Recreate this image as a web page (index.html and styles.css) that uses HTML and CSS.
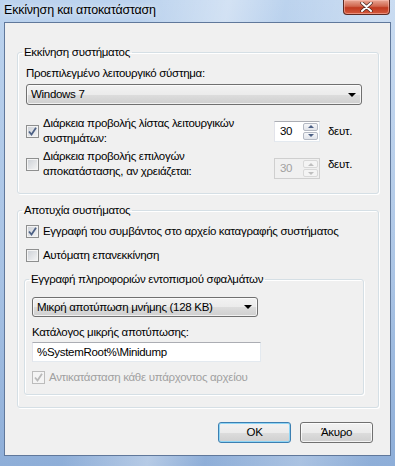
FILE: index.html
```html
<!DOCTYPE html>
<html lang="el">
<head>
    <meta charset="UTF-8">
    <title>Εκκίνηση και αποκατάσταση</title>
    <link rel="stylesheet" href="styles.css">
</head>
<body>
    <div class="window">
        <div class="titlebar">
            <span class="title">Εκκίνηση και αποκατάσταση</span>
            <span class="close-btn">
                <svg width="13" height="10" viewBox="0 0 13 10">
                    <path d="M2 1 L11 9 M11 1 L2 9" stroke="#4a2a24" stroke-width="3.4" stroke-linecap="round"/>
                    <path d="M2 1 L11 9 M11 1 L2 9" stroke="#fff" stroke-width="2" stroke-linecap="round"/>
                </svg>
            </span>
        </div>

        <div class="client">
            <!-- Εκκίνηση -->
            <fieldset class="group group-startup">
                <legend>Εκκίνηση συστήματος</legend>
                <div class="field-label">Προεπιλεγμένο λειτουργικό σύστημα:</div>
                <div class="combo combo-os"><span>Windows 7</span><i class="combo-arrow"></i></div>

                <div class="timer-row timer-list">
                    <label class="check">
                        <span class="box is-checked">
                            <svg width="9" height="9" viewBox="0 0 9 9"><path d="M1 4.5 L3.5 7.5 L8 0.8" fill="none" stroke="#4d6185" stroke-width="1.8"/></svg>
                        </span>
                        <span class="check-text">Διάρκεια προβολής λίστας λειτουργικών<br>συστημάτων:</span>
                    </label>
                    <div class="spin">
                        <span class="spin-value">30</span>
                        <span class="spin-btns"><span class="spin-up"><i></i></span><span class="spin-down"><i></i></span></span>
                    </div>
                    <span class="unit">δευτ.</span>
                </div>

                <div class="timer-row timer-recovery">
                    <label class="check">
                        <span class="box"></span>
                        <span class="check-text">Διάρκεια προβολής επιλογών<br>αποκατάστασης, αν χρειάζεται:</span>
                    </label>
                    <div class="spin is-disabled">
                        <span class="spin-value">30</span>
                        <span class="spin-btns"><span class="spin-up"><i></i></span><span class="spin-down"><i></i></span></span>
                    </div>
                    <span class="unit">δευτ.</span>
                </div>
            </fieldset>

            <!-- Αποτυχία -->
            <fieldset class="group group-failure">
                <legend>Αποτυχία συστήματος</legend>
                <label class="check check-line">
                    <span class="box is-checked">
                        <svg width="9" height="9" viewBox="0 0 9 9"><path d="M1 4.5 L3.5 7.5 L8 0.8" fill="none" stroke="#4d6185" stroke-width="1.8"/></svg>
                    </span>
                    <span class="check-text">Εγγραφή του συμβάντος στο αρχείο καταγραφής συστήματος</span>
                </label>
                <label class="check check-line check-restart">
                    <span class="box"></span>
                    <span class="check-text">Αυτόματη επανεκκίνηση</span>
                </label>

                <fieldset class="group group-debug">
                    <legend>Εγγραφή πληροφοριών εντοπισμού σφαλμάτων</legend>
                    <div class="combo combo-dump"><span>Μικρή αποτύπωση μνήμης (128 KB)</span><i class="combo-arrow"></i></div>
                    <div class="field-label dump-label">Κατάλογος μικρής αποτύπωσης:</div>
                    <div class="textbox">%SystemRoot%\Minidump</div>
                    <label class="check check-line is-disabled">
                        <span class="box is-checked">
                            <svg width="9" height="9" viewBox="0 0 9 9"><path d="M1 4.5 L3.5 7.5 L8 0.8" fill="none" stroke="#b9b9b9" stroke-width="1.8"/></svg>
                        </span>
                        <span class="check-text">Αντικατάσταση κάθε υπάρχοντος αρχείου</span>
                    </label>
                </fieldset>
            </fieldset>

            <div class="buttons">
                <button class="btn btn-default">OK</button>
                <button class="btn">Άκυρο</button>
            </div>
        </div>
    </div>
</body>
</html>
```

FILE: styles.css
```css
:root {
    --face: #f0f0f0;
    --group-line: #d5dfe5;
    --text: #000;
    --disabled: #a0a0a0;
}
* {
    margin: 0;
    padding: 0;
    box-sizing: border-box;
}
body {
    width: 395px;
    height: 466px;
    overflow: hidden;
    font-family: "Liberation Sans", "DejaVu Sans", sans-serif;
    font-size: 11.5px;
    line-height: 15px;
    letter-spacing: -0.3px;
    color: var(--text);
    background: #a9c3e3;
}
.window {
    height: 466px;
    display: flex;
    flex-direction: column;
    background:
        linear-gradient(100deg, rgba(255,255,255,0) 30%, rgba(255,255,255,0.35) 48%, rgba(255,255,255,0) 60%, rgba(255,255,255,0.25) 80%, rgba(255,255,255,0) 95%),
        linear-gradient(#bcd3ee, #a7c2e4 60%, #8eaed8);
}

/* title bar */
.titlebar {
    height: 22px;
    display: flex;
    justify-content: space-between;
    align-items: flex-start;
}
.title {
    padding: 3px 0 0 4px;
    font-size: 12.5px;
    letter-spacing: -0.2px;
    color: #000;
    text-shadow: 0 0 6px rgba(255, 255, 255, 0.9);
}
.close-btn {
    width: 47px;
    height: 15px;
    margin-right: 5px;
    display: flex;
    align-items: center;
    justify-content: center;
    border: 1px solid #5d2a22;
    border-top: none;
    border-radius: 0 0 4px 4px;
    background: linear-gradient(#e9a896, #d0664e 45%, #c0391f 55%, #d4593d);
    box-shadow: inset 0 0 0 1px rgba(255, 200, 190, 0.5);
}

/* client area */
.client {
    height: 434px;
    margin: 0 4px;
    padding: 21px 11px 0 12px;
    background: var(--face);
    border: 1px solid #60789b;
}

/* group boxes */
.group {
    border: 1px solid var(--group-line);
    border-radius: 3px;
    box-shadow: inset 1px 1px 0 #fff, 1px 1px 0 #fff;
}
.group legend {
    margin-left: -4px;
    padding: 0 2px;
    line-height: 16px;
}
.group-startup {
    padding: 6px 16px 14px 8px;
}
.group-failure {
    margin-top: 8px;
    padding: 6px 14px 12px 6px;
}
.group-failure > legend {
    margin-left: -2px;
}
.group-debug {
    margin-top: 8px;
    padding: 10px 7px 9px 7px;
}
.group-debug legend {
    margin-left: -3px;
}

.field-label {
    white-space: nowrap;
}

/* combo boxes */
.combo {
    height: 21px;
    margin-top: 3px;
    padding: 0 0 0 4px;
    display: flex;
    align-items: center;
    justify-content: space-between;
    border: 1px solid #707070;
    border-radius: 3px;
    background: linear-gradient(#f2f2f2, #ebebeb 50%, #dddddd 50%, #cfcfcf);
    box-shadow: inset 0 0 0 1px rgba(255, 255, 255, 0.7);
    white-space: nowrap;
}
.combo-arrow {
    width: 0;
    height: 0;
    margin-right: 5px;
    border-left: 4px solid transparent;
    border-right: 4px solid transparent;
    border-top: 4px solid #000;
}
.combo-dump {
    width: 226px;
    height: 20px;
    margin-top: 0;
}

/* checkboxes */
.check {
    display: flex;
    align-items: center;
    gap: 4px;
}
.box {
    flex: none;
    width: 13px;
    height: 13px;
    display: flex;
    align-items: center;
    justify-content: center;
    border: 1px solid #8e8f8f;
    background: linear-gradient(135deg, #cbcfd5, #f6f6f6);
    box-shadow: inset 0 0 0 1px #f4f4f4;
}
.check-line {
    margin-left: 2px;
}
.check-restart {
    margin-top: 9px;
}
.is-disabled {
    color: var(--disabled);
}
.is-disabled .box {
    border-color: #bcbcbc;
    background: #f4f4f4;
}

/* timer rows */
.timer-row {
    display: flex;
    align-items: center;
}
.timer-list {
    margin-top: 11px;
}
.timer-recovery {
    margin-top: 3px;
}
.timer-row .check {
    flex: 1;
}
.timer-recovery .spin {
    margin-top: 9px;
}
.spin {
    width: 46px;
    height: 21px;
    display: flex;
    border: 1px solid #abadb3;
    border-color: #abadb3 #e3e9ef #e3e9ef #e2e3ea;
    background: #fff;
}
.spin-value {
    flex: 1;
    padding: 2px 0 0 5px;
}
.spin-btns {
    width: 17px;
    display: flex;
    flex-direction: column;
    padding: 1px;
    gap: 1px;
}
.spin-btns > span {
    flex: 1;
    display: flex;
    align-items: center;
    justify-content: center;
    border: 1px solid #b4b9c3;
    border-radius: 2px;
    background: linear-gradient(#f6f7f9, #e1e4ea);
}
.spin-up i,
.spin-down i {
    width: 0;
    height: 0;
    border-left: 3px solid transparent;
    border-right: 3px solid transparent;
}
.spin-up i {
    border-bottom: 3px solid #4d6185;
}
.spin-down i {
    border-top: 3px solid #4d6185;
}
.spin.is-disabled {
    background: var(--face);
    border-color: #cfcfcf;
}
.spin.is-disabled .spin-btns > span {
    border-color: #d8d8d8;
    background: #f4f4f4;
}
.spin.is-disabled .spin-up i {
    border-bottom-color: #bfbfbf;
}
.spin.is-disabled .spin-down i {
    border-top-color: #bfbfbf;
}
.unit {
    width: 34px;
    margin-left: 8px;
}

.dump-label {
    margin-top: 8px;
}
.textbox {
    width: 229px;
    height: 20px;
    margin-top: 2px;
    padding: 2px 0 0 4px;
    background: #fff;
    border: 1px solid #abadb3;
    border-color: #abadb3 #e3e9ef #e3e9ef #e2e3ea;
}
.group-debug .check-line {
    margin-top: 8px;
    margin-left: 0;
}

/* dialog buttons */
.buttons {
    margin-top: 14px;
    padding-right: 6px;
    display: flex;
    justify-content: flex-end;
    gap: 9px;
}
.btn {
    width: 73px;
    height: 21px;
    font: inherit;
    letter-spacing: inherit;
    color: #000;
    border: 1px solid #707070;
    border-radius: 3px;
    background: linear-gradient(#f2f2f2, #ebebeb 50%, #dddddd 50%, #cfcfcf);
    box-shadow: inset 0 0 0 1px rgba(255, 255, 255, 0.75);
}
.btn-default {
    border-color: #3c7fb1;
    box-shadow: inset 0 0 0 1px #8fd5f5;
}
```
